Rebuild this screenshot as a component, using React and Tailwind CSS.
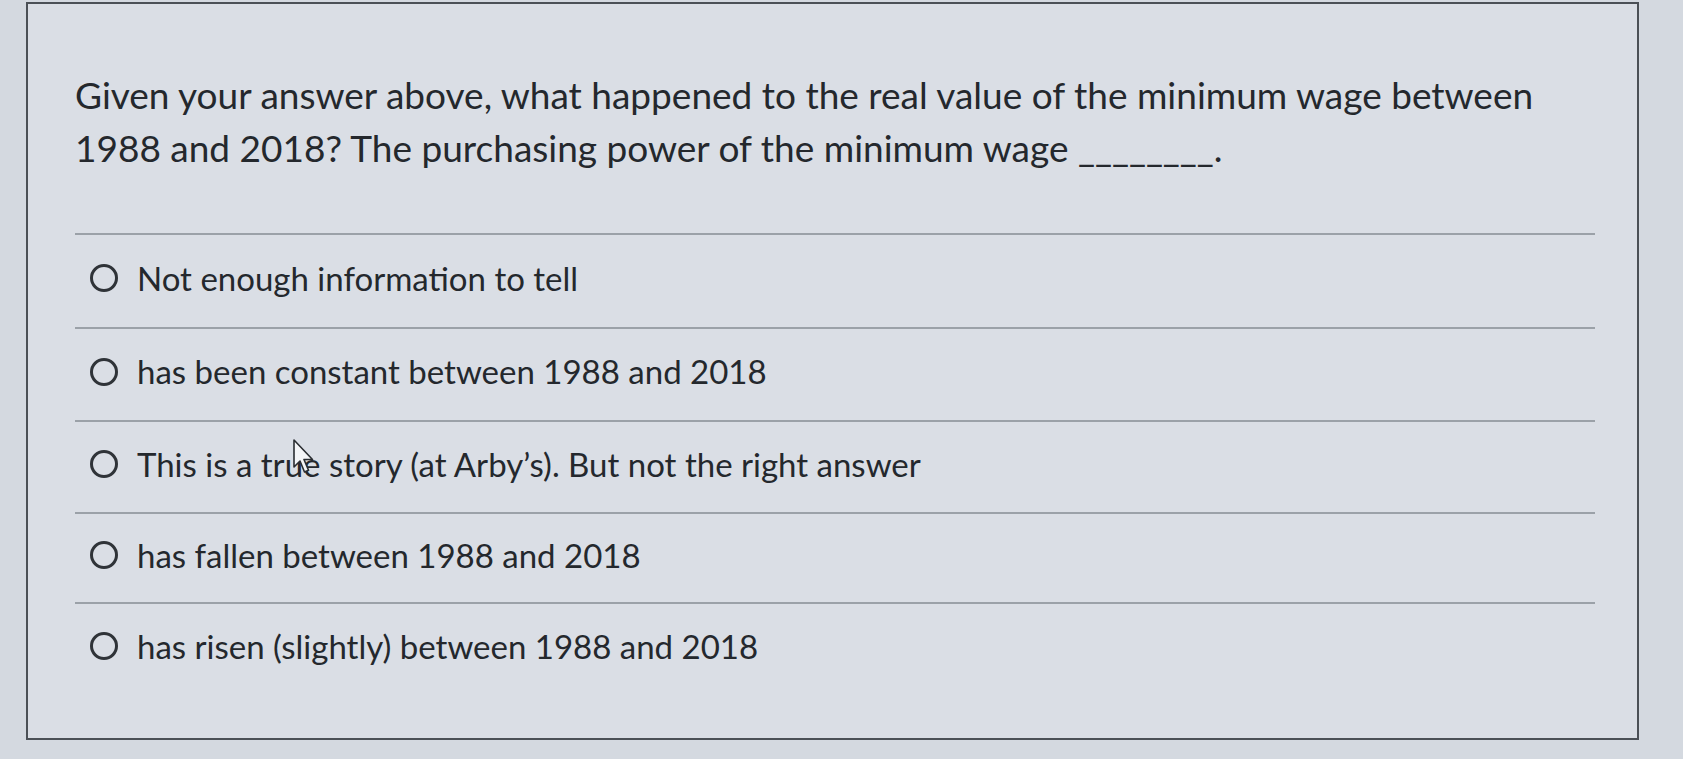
import React from 'react';

const options = [
  { text: 'Not enough information to tell', h: 'h-[94px]' },
  { text: 'has been constant between 1988 and 2018', h: 'h-[93px]' },
  { text: 'This is a true story (at Arby\u2019s). But not the right answer', h: 'h-[92px]' },
  { text: 'has fallen between 1988 and 2018', h: 'h-[90px]' },
  { text: 'has risen (slightly) between 1988 and 2018', h: 'h-[92px]' },
];

function Cursor() {
  return (
    <svg
      className="absolute left-[292px] top-[439px] pointer-events-none"
      width="24"
      height="36"
      viewBox="0 0 24 36"
    >
      <path
        d="M2 1 L2 28 L8 22 L12.5 33 L16.5 31.3 L12 20.5 L20.5 20.5 Z"
        fill="#f4f5f7"
        stroke="#2a2d31"
        strokeWidth="1.6"
        strokeLinejoin="round"
      />
    </svg>
  );
}

function App() {
  return (
    <div
      className="relative w-[1683px] h-[759px] overflow-hidden bg-[#d4d9e0] text-[#24282d]"
      style={{ fontFamily: 'Lato, "Open Sans", sans-serif' }}
    >
      <div className="ml-[26px] mt-[2px] w-[1613px] h-[738px] border-2 border-[#4b5056] bg-[#dadee5] pt-[64px] pl-[47px] pr-[42px]">
        <p className="text-[37px] leading-[53px] pr-[40px]">
          Given your answer above, what happened to the real value of the minimum wage between 1988 and 2018? The purchasing power of the minimum wage ________.
        </p>
        <div className="mt-[59px]">
          {options.map((opt) => (
            <div
              key={opt.text}
              className={`flex items-center ${opt.h} border-t-2 border-[#9ba1a8] pl-[15px] pb-[6px]`}
            >
              <span className="w-[28px] h-[28px] rounded-full border-[3px] border-[#2f3338] shrink-0" />
              <span className="ml-[19px] text-[33px] leading-none">{opt.text}</span>
            </div>
          ))}
        </div>
      </div>
      <Cursor />
    </div>
  );
}

export default App;
